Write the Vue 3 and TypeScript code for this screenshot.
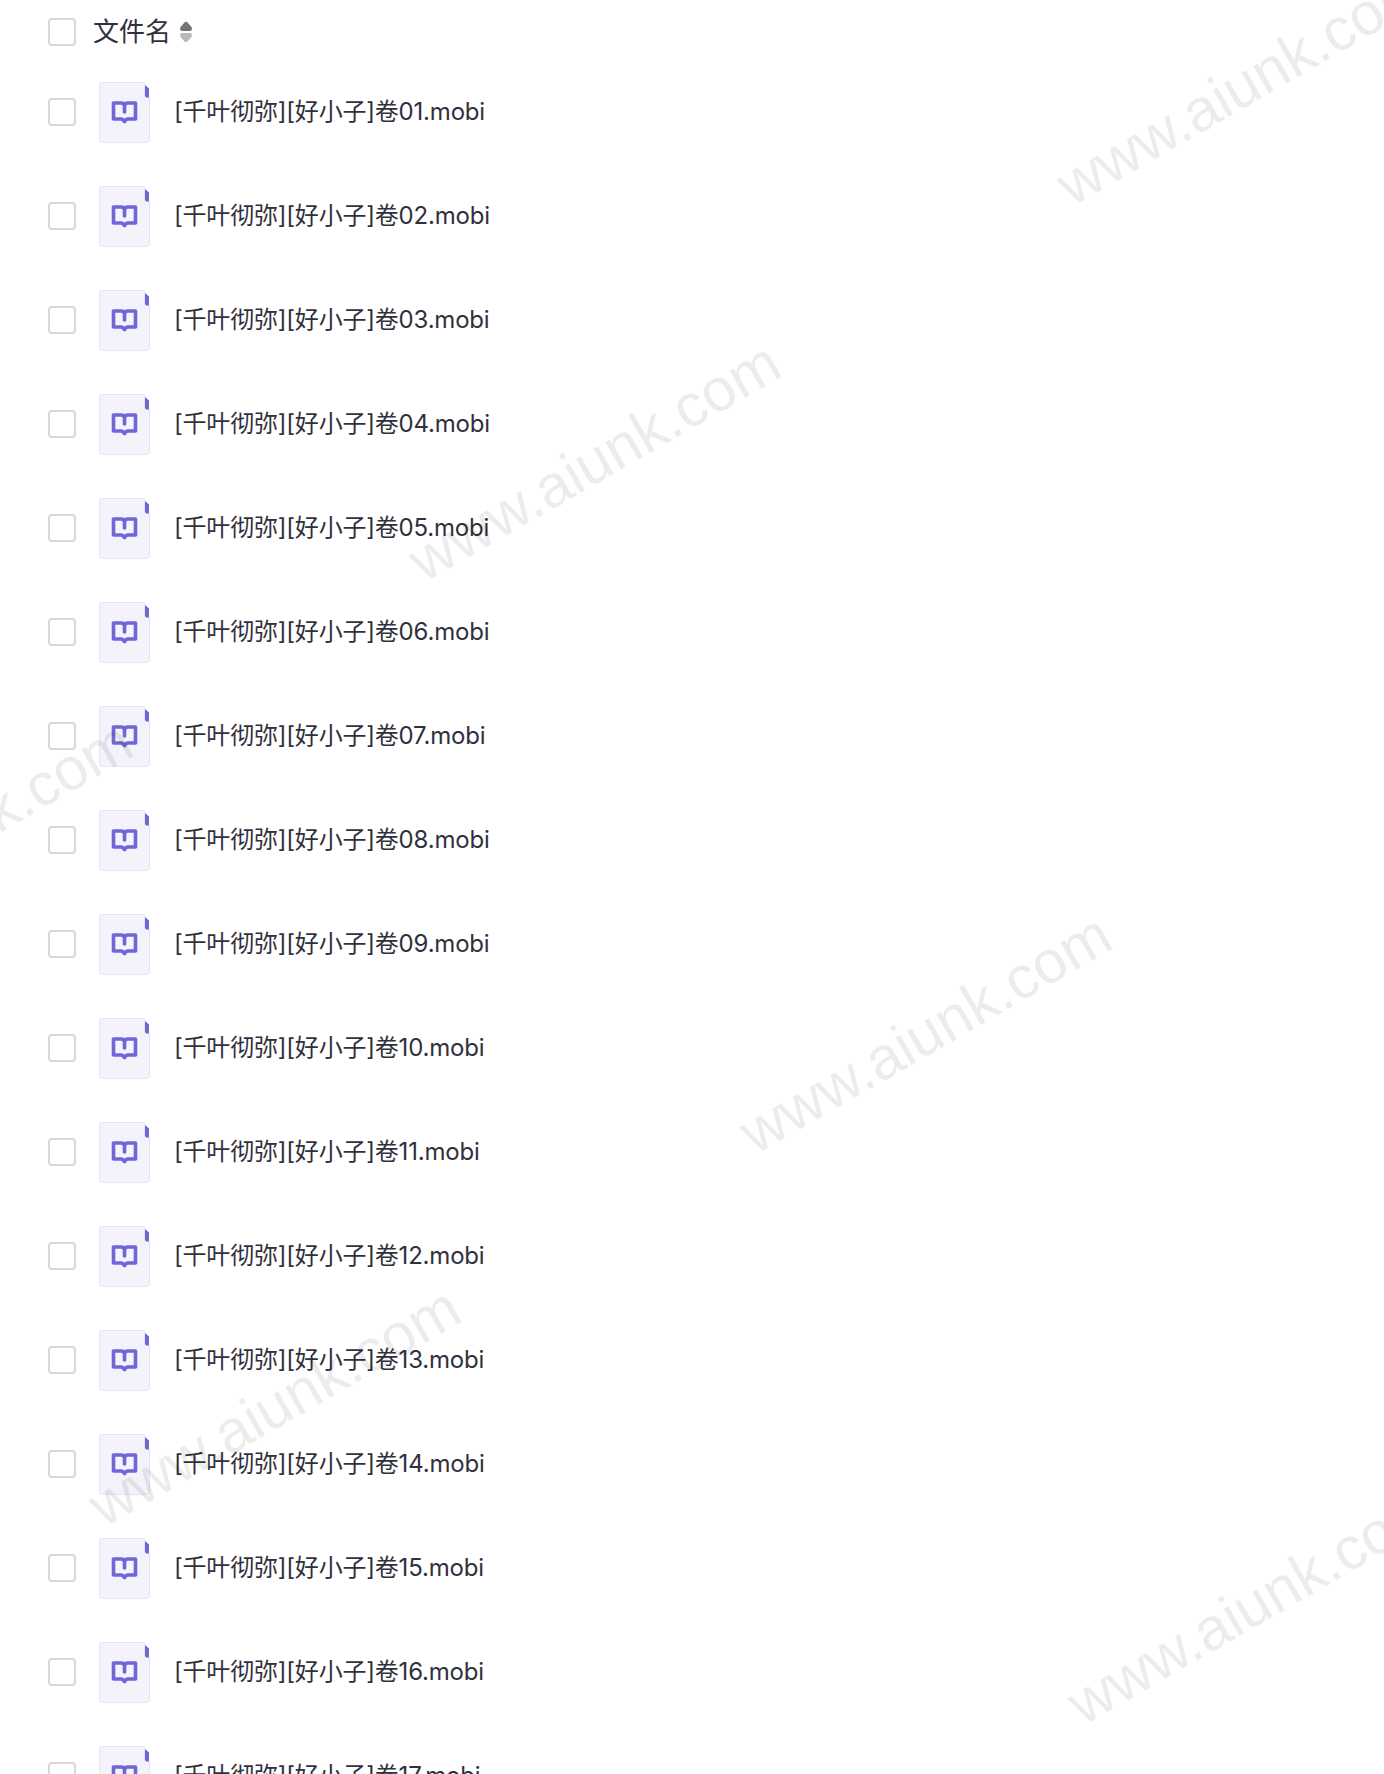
<script setup lang="ts">
const files = Array.from({ length: 17 }, (_, i) => {
  const n = String(i + 1).padStart(2, '0')
  return `[千叶彻弥][好小子]卷${n}.mobi`
})

// start point of each watermark, on its baseline
const marks = [
  { x: 1077, y: 216 },
  { x: 429, y: 592 },
  { x: 760, y: 1164 },
  { x: 109, y: 1537 },
  { x: 1088, y: 1735 },
  { x: -219, y: 971 },
]
</script>

<template>
  <div class="page">
    <div class="head-row">
      <span class="check"></span>
      <span class="head-title">文件名</span>
      <svg class="sort" width="14" height="22" viewBox="0 0 14 22">
        <path d="M5.500 1.500 Q7 0 8.500 1.500 L12.500 6 Q14 10 10.500 10 H3.500 Q0 10 1.500 6 Z" fill="#73737a" />
        <path d="M5.500 20.500 Q7 22 8.500 20.500 L12.500 16 Q14 12 10.500 12 H3.500 Q0 12 1.500 16 Z" fill="#b9b9bd" />
      </svg>
    </div>

    <div v-for="name in files" :key="name" class="file-row">
      <span class="check"></span>
      <svg class="file-icon" width="51" height="61" viewBox="0 0 51 61">
        <path d="M3.500 0.500 H45.500 V15.500 H50.500 V57.500 Q50.500 60.500 47.500 60.500 H3.500 Q0.500 60.500 0.500 57.500 V3.500 Q0.500 0.500 3.500 0.500 Z" fill="#f4f3fc" stroke="#e5e3f6" />
        <path d="M46 3 L50 6.500 V15.500 H48 Q46 15.500 46 13.500 Z" fill="#6e68d6" />
        <g fill="none" stroke="#6e68d6" stroke-width="3.600" stroke-linejoin="round" stroke-linecap="round">
          <path d="M14.500 21 H22 Q25.500 21 25.500 24 Q25.500 21 29 21 H36.500 V37 H29 Q27 37 25.500 39.500 Q24 37 22 37 H14.500 Z" />
          <path d="M25.500 24 V30" />
        </g>
      </svg>
      <span class="file-name">{{ name }}</span>
    </div>

    <span
      v-for="(m, i) in marks"
      :key="i"
      class="watermark"
      :style="{ left: m.x + 'px', top: m.y + 'px' }"
    >www.aiunk.com</span>
  </div>
</template>

<style scoped>
.page { position: relative; width: 1384px; height: 1774px; overflow: hidden; background: #fff; font-family: Inter, "Noto Sans CJK SC", sans-serif; color: #30313d; }

.head-row { display: flex; align-items: center; height: 60px; padding: 4px 0 0 48px; box-sizing: border-box; }
.head-title { margin-left: 17px; font-size: 26px; line-height: 32px; }
.sort { margin-left: 8px; }

.check { flex: none; box-sizing: border-box; width: 28px; height: 28px; border: 2px solid #d9d9d9; border-radius: 4px; background: #fff; }

.file-row { display: flex; align-items: center; height: 104px; padding-left: 48px; box-sizing: border-box; }
.file-icon { flex: none; margin-left: 23px; }
.file-name { margin-left: 24px; font-size: 24px; line-height: 32px; letter-spacing: -0.2px; }

.watermark { position: absolute; transform: translateY(-100%) rotate(-30deg); transform-origin: left bottom; font-family: "Liberation Sans", sans-serif; font-size: 60px; line-height: 60px; color: rgba(0, 0, 0, 0.075); white-space: nowrap; pointer-events: none; }
</style>
